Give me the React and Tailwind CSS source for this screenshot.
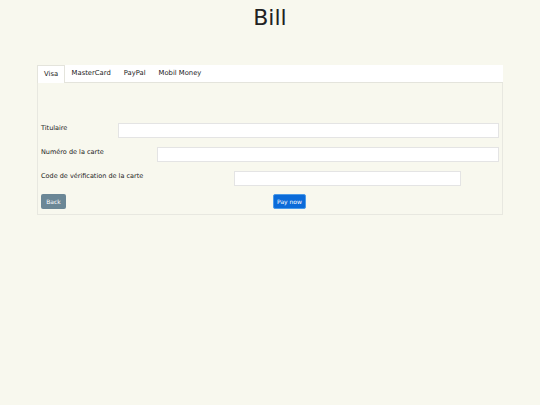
import { useState } from 'react';

const tabs = ['Visa', 'MasterCard', 'PayPal', 'Mobil Money'];

export default function App() {
    const [active, setActive] = useState('Visa');

    return (
        <div className="min-h-[405px] bg-[#f8f8ee] text-[#333] pt-[4px]" style={{ fontFamily: '"DejaVu Sans", sans-serif' }}>
            <h1 className="text-center text-[22px] leading-[28px] font-normal text-[#222]">Bill</h1>

            <div className="mx-[37px] mt-[33px] w-[466px]">
                {/* Tabs */}
                <div className="flex bg-white h-[18px] border-b border-[#e4e4dc]">
                    {tabs.map((t) => (
                        <button
                            key={t}
                            onClick={() => setActive(t)}
                            className={`text-[6.8px] leading-[17px] text-[#222] ${active === t ? 'px-[6px] bg-white border border-b-0 border-[#e4e4dc] h-[18px] -mb-px' : 'px-[6.5px]'}`}
                        >
                            {t}
                        </button>
                    ))}
                </div>

                {/* Panel */}
                <div className="border border-t-0 border-[#e8e8e0] px-[3px] pt-[40px] pb-[5px] text-[6.5px] text-[#222]">
                    <div className="flex items-start h-[24px]">
                        <label className="w-[77px] pt-[1px]">Titulaire</label>
                        <input className="flex-1 h-[15px] bg-white border border-[#e4e4e4]" />
                    </div>
                    <div className="flex items-start h-[24px]">
                        <label className="w-[116px] pt-[1px]">Numéro de la carte</label>
                        <input className="flex-1 h-[15px] bg-white border border-[#e4e4e4]" />
                    </div>
                    <div className="flex items-start h-[23px]">
                        <label className="w-[193px] pt-[1px]">Code de vérification de la carte</label>
                        <input className="w-[227px] h-[15px] bg-white border border-[#e4e4e4]" />
                    </div>
                    <div className="flex items-center h-[15px]">
                        <button className="w-[25px] h-[15px] rounded-[2px] bg-[#6b8796] text-white text-[6px]">Back</button>
                        <button className="ml-[207px] w-[33px] h-[15px] rounded-[2px] bg-[#0b6bd9] border border-[#4c9be8] text-white text-[6px]">Pay now</button>
                    </div>
                </div>
            </div>
        </div>
    );
}
